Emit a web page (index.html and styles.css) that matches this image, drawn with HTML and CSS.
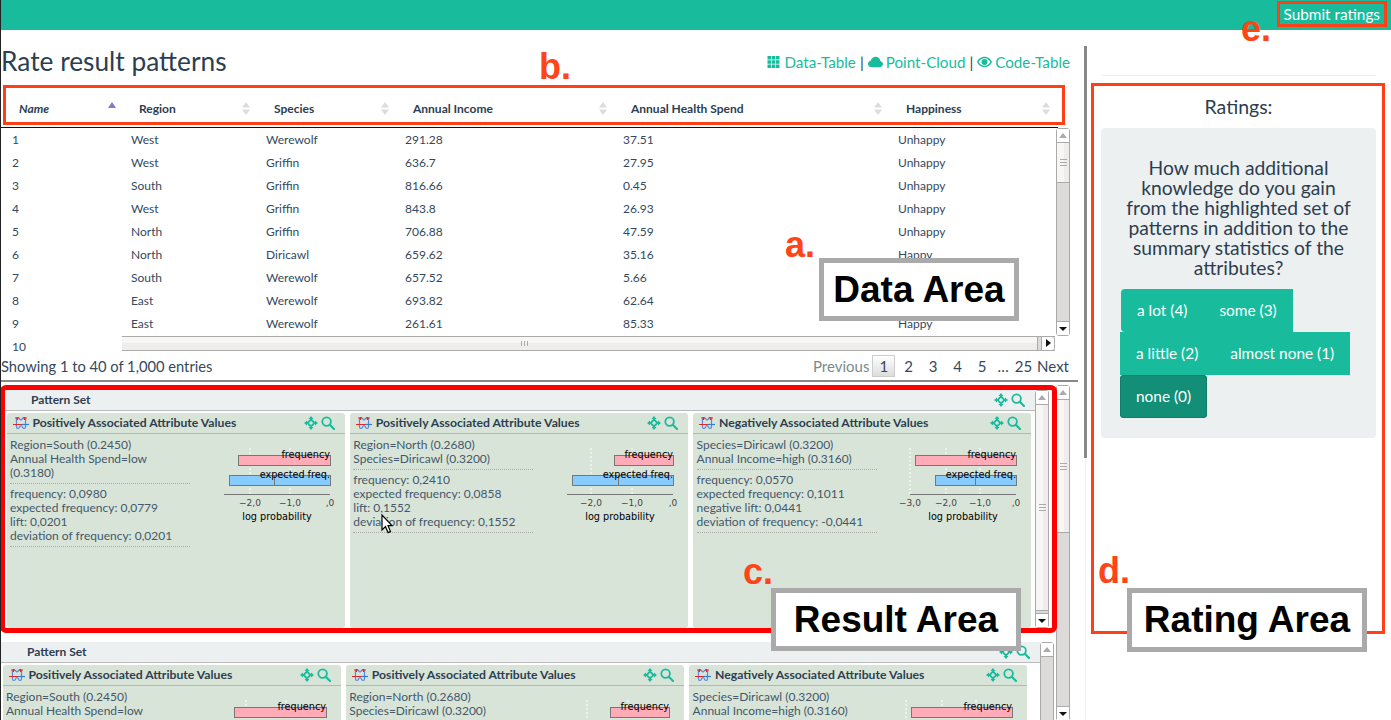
FILE: index.html
```html
<!DOCTYPE html>
<html lang="en">
<head>
<meta charset="utf-8">
<title>Rate result patterns</title>
<link rel="stylesheet" href="styles.css">
</head>
<body>
<svg class="defs" aria-hidden="true">
  <symbol id="i-move" viewBox="0 0 14 14"><path d="M7 0l2.500 3h-5zM7 14l-2.500-3h5zM0 7l3-2.500v5zM14 7l-3 2.500v-5z" fill="#18bc9c"/><path d="M7 3.500L10.500 7 7 10.500 3.500 7z" fill="none" stroke="#18bc9c" stroke-width="1.800"/></symbol>
  <symbol id="i-search" viewBox="0 0 14 14"><circle cx="5.600" cy="5.600" r="4.300" fill="none" stroke="#18bc9c" stroke-width="1.800"/><path d="M8.800 8.800l4.200 4.200" stroke="#18bc9c" stroke-width="2.200" stroke-linecap="round"/></symbol>
  <symbol id="i-pattern" viewBox="0 0 16 14"><path d="M5 1.500c-2 0-1.500 2.500-1.500 5.500s-.5 5.500 1.500 5.500c2 0 1.500-3 3-3s1 3 3 3 1.500-2.500 1.500-5.500S13 1.500 11 1.500 9.500 4 8 4 7 1.500 5 1.500z" fill="none" stroke="#5a86d8" stroke-width="1.200"/><path d="M0 8.500h9M2 2h4M10 2h4M4.500 1v3M11.500 1v3" stroke="#e8242a" stroke-width="1.200" fill="none"/><path d="M9 8.500h7" stroke="#2f7fd8" stroke-width="1.200"/></symbol>
  <symbol id="i-sort" viewBox="0 0 8 13"><path d="M4 0l4 5.500H0zM4 13L0 7.500h8z" fill="#dcdcdc"/></symbol>
</svg>

<header class="topbar"><a class="submit">Submit ratings</a></header>

<main class="main">
  <section class="left">
    <div class="title-row">
      <h1 class="title">Rate result patterns</h1>
      <nav class="views">
        <svg class="view-icon" viewBox="0 0 14 14"><path d="M1 1h3.600v3.600H1zM5.200 1h3.600v3.600H5.200zM9.400 1H13v3.600H9.400zM1 5.200h3.600v3.600H1zM5.200 5.200h3.600v3.600H5.200zM9.400 5.200H13v3.600H9.400zM1 9.400h3.600V13H1zM5.200 9.400h3.600V13H5.200zM9.400 9.400H13V13H9.400z" fill="#18bc9c"/></svg>
        <a class="view-link">Data-Table</a><span class="sep">|</span>
        <svg class="view-icon" viewBox="0 0 16 14"><path d="M4 12.500C1.800 12.500 0 11 0 9c0-1.800 1.300-3.100 3-3.300C3.500 3.300 5.600 1.500 8.200 1.500c2.600 0 4.700 1.900 5 4.300 1.600.4 2.800 1.700 2.800 3.300 0 1.900-1.600 3.400-3.600 3.400z" fill="#18bc9c"/></svg>
        <a class="view-link">Point-Cloud</a><span class="sep">|</span>
        <svg class="view-icon" viewBox="0 0 16 14"><path fill-rule="evenodd" d="M8 1.500c3.800 0 6.800 2.600 8 5.500-1.200 2.900-4.200 5.500-8 5.500S1.200 9.900 0 7c1.200-2.900 4.200-5.500 8-5.500zM8 3C5.400 3 3 4.700 1.700 7 3 9.300 5.400 11 8 11s5-1.700 6.300-4C13 4.700 10.600 3 8 3zm0 .8a3.200 3.200 0 1 1 0 6.400 3.200 3.200 0 0 1 0-6.400z" fill="#18bc9c"/></svg>
        <a class="view-link">Code-Table</a>
      </nav>
    </div>

    <div class="thead">
      <div class="th th-sorted"><span>Name</span><i class="sort-up"></i></div>
      <div class="th"><span>Region</span><svg class="sort"><use href="#i-sort"/></svg></div>
      <div class="th"><span>Species</span><svg class="sort"><use href="#i-sort"/></svg></div>
      <div class="th"><span>Annual Income</span><svg class="sort"><use href="#i-sort"/></svg></div>
      <div class="th"><span>Annual Health Spend</span><svg class="sort"><use href="#i-sort"/></svg></div>
      <div class="th th-last"><span>Happiness</span><svg class="sort"><use href="#i-sort"/></svg></div>
    </div>

    <div class="tbody-wrap">
      <div class="tbody">
        <div class="tr"><span>1</span><span>West</span><span>Werewolf</span><span>291.28</span><span>37.51</span><span>Unhappy</span></div>
        <div class="tr"><span>2</span><span>West</span><span>Griffin</span><span>636.7</span><span>27.95</span><span>Unhappy</span></div>
        <div class="tr"><span>3</span><span>South</span><span>Griffin</span><span>816.66</span><span>0.45</span><span>Unhappy</span></div>
        <div class="tr"><span>4</span><span>West</span><span>Griffin</span><span>843.8</span><span>26.93</span><span>Unhappy</span></div>
        <div class="tr"><span>5</span><span>North</span><span>Griffin</span><span>706.88</span><span>47.59</span><span>Unhappy</span></div>
        <div class="tr"><span>6</span><span>North</span><span>Diricawl</span><span>659.62</span><span>35.16</span><span>Happy</span></div>
        <div class="tr"><span>7</span><span>South</span><span>Werewolf</span><span>657.52</span><span>5.66</span><span></span></div>
        <div class="tr"><span>8</span><span>East</span><span>Werewolf</span><span>693.82</span><span>62.64</span><span></span></div>
        <div class="tr"><span>9</span><span>East</span><span>Werewolf</span><span>261.61</span><span>85.33</span><span>Happy</span></div>
        <div class="tr"><span>10</span></div>
      </div>
      <div class="vbar vbar-table">
        <b class="btn-up"></b>
        <div class="track"><div class="thumb thumb-table"><i class="grip"></i></div></div>
        <b class="btn-down"></b>
      </div>
      <div class="hbar">
        <div class="hthumb"><i class="hgrip"></i></div>
        <b class="btn-right"></b>
      </div>
    </div>

    <div class="table-foot">
      <span class="info">Showing 1 to 40 of 1,000 entries</span>
      <div class="pager">
        <a class="pg-prev">Previous</a>
        <a class="pg-current">1</a>
        <a class="pg">2</a><a class="pg">3</a><a class="pg">4</a><a class="pg">5</a>
        <span class="pg-gap">…</span>
        <a class="pg-end">25</a>
        <a class="pg-end">Next</a>
      </div>
    </div>

    <div class="results">
      <div class="sets">
        <div class="set set-first">
          <div class="set-body">
            <div class="set-head"><span>Pattern Set</span><span class="tools"><svg class="ico"><use href="#i-move"/></svg><svg class="ico"><use href="#i-search"/></svg></span></div>
            <div class="cards">
              <article class="card">
                <div class="card-head"><svg class="pat"><use href="#i-pattern"/></svg><h3>Positively Associated Attribute Values</h3><span class="tools"><svg class="ico"><use href="#i-move"/></svg><svg class="ico"><use href="#i-search"/></svg></span></div>
                <div class="card-body">
                  <div class="stats">
                    <p class="items">Region=South (0.2450)<br>Annual Health Spend=low (0.3180)</p>
                    <p class="items">frequency: 0,0980<br>expected frequency: 0,0779<br>lift: 0,0201<br>deviation of frequency: 0,0201</p>
                  </div>
                  <svg class="chart" viewBox="-6 0 126 90">
                    <path class="dash" d="M35 8v46M75 8v46"/>
                    <rect class="bar-pink" x="23.500" y="15.500" width="92" height="10"/>
                    <rect class="bar-blue" x="14.500" y="35.500" width="101" height="10"/>
                    <path class="axis" d="M59.500 35v11M9 54.500h106"/>
                    <text class="lbl" x="115" y="18" text-anchor="end">frequency</text>
                    <text class="lbl" x="115" y="38" text-anchor="end">expected freq.</text>
                    <text class="tick" x="35" y="66" text-anchor="middle">−2,0</text>
                    <text class="tick" x="75" y="66" text-anchor="middle">−1,0</text>
                    <text class="tick" x="115" y="66" text-anchor="middle">,0</text>
                    <text class="lbl" x="62" y="80" text-anchor="middle">log probability</text>
                  </svg>
                </div>
              </article>
              <article class="card">
                <div class="card-head"><svg class="pat"><use href="#i-pattern"/></svg><h3>Positively Associated Attribute Values</h3><span class="tools"><svg class="ico"><use href="#i-move"/></svg><svg class="ico"><use href="#i-search"/></svg></span></div>
                <div class="card-body">
                  <div class="stats">
                    <p class="items">Region=North (0.2680)<br>Species=Diricawl (0.3200)</p>
                    <p class="items">frequency: 0,2410<br>expected frequency: 0,0858<br>lift: 0,1552<br>deviation of frequency: 0,1552</p>
                  </div>
                  <svg class="chart" viewBox="-6 0 126 90">
                    <path class="dash" d="M33 8v46M74 8v46"/>
                    <rect class="bar-pink" x="56.500" y="15.500" width="59" height="10"/>
                    <rect class="bar-blue" x="14.500" y="35.500" width="101" height="10"/>
                    <path class="axis" d="M60.500 35v11M9 54.500h106"/>
                    <text class="lbl" x="115" y="18" text-anchor="end">frequency</text>
                    <text class="lbl" x="115" y="38" text-anchor="end">expected freq.</text>
                    <text class="tick" x="33" y="66" text-anchor="middle">−2,0</text>
                    <text class="tick" x="74" y="66" text-anchor="middle">−1,0</text>
                    <text class="tick" x="115" y="66" text-anchor="middle">,0</text>
                    <text class="lbl" x="62" y="80" text-anchor="middle">log probability</text>
                  </svg>
                </div>
              </article>
              <article class="card">
                <div class="card-head"><svg class="pat"><use href="#i-pattern"/></svg><h3>Negatively Associated Attribute Values</h3><span class="tools"><svg class="ico"><use href="#i-move"/></svg><svg class="ico"><use href="#i-search"/></svg></span></div>
                <div class="card-body">
                  <div class="stats">
                    <p class="items">Species=Diricawl (0.3200)<br>Annual Income=high (0.3160)</p>
                    <p class="items">frequency: 0,0570<br>expected frequency: 0,1011<br>negative lift: 0,0441<br>deviation of frequency: -0,0441</p>
                  </div>
                  <svg class="chart" viewBox="-6 0 126 90">
                    <path class="dash" d="M9 8v46M45 8v46M79 8v46"/>
                    <rect class="bar-pink" x="14.500" y="15.500" width="101" height="10"/>
                    <rect class="bar-blue" x="34.500" y="35.500" width="81" height="10"/>
                    <path class="axis" d="M74.500 35v11M9 54.500h106"/>
                    <text class="lbl" x="115" y="18" text-anchor="end">frequency</text>
                    <text class="lbl" x="115" y="38" text-anchor="end">expected freq.</text>
                    <text class="tick" x="9" y="66" text-anchor="middle">−3,0</text>
                    <text class="tick" x="45" y="66" text-anchor="middle">−2,0</text>
                    <text class="tick" x="79" y="66" text-anchor="middle">−1,0</text>
                    <text class="tick" x="115" y="66" text-anchor="middle">,0</text>
                    <text class="lbl" x="62" y="80" text-anchor="middle">log probability</text>
                  </svg>
                </div>
              </article>
            </div>
          </div>
          <div class="vbar vbar-inner">
            <b class="btn-up"></b>
            <div class="track"><div class="thumb thumb-full"><i class="grip"></i></div></div>
            <b class="btn-down"></b>
          </div>
        </div>

        <div class="set set-second">
          <div class="set-body">
            <div class="set-head"><span>Pattern Set</span><span class="tools"><svg class="ico"><use href="#i-move"/></svg><svg class="ico"><use href="#i-search"/></svg></span></div>
            <div class="cards">
              <article class="card">
                <div class="card-head"><svg class="pat"><use href="#i-pattern"/></svg><h3>Positively Associated Attribute Values</h3><span class="tools"><svg class="ico"><use href="#i-move"/></svg><svg class="ico"><use href="#i-search"/></svg></span></div>
                <div class="card-body">
                  <div class="stats"><p class="items">Region=South (0.2450)<br>Annual Health Spend=low</p></div>
                  <svg class="chart chart-short" viewBox="-6 0 126 26">
                    <path class="dash" d="M35 8v18M75 8v18"/>
                    <rect class="bar-pink" x="23.500" y="15.500" width="92" height="10"/>
                    <text class="lbl" x="115" y="18" text-anchor="end">frequency</text>
                  </svg>
                </div>
              </article>
              <article class="card">
                <div class="card-head"><svg class="pat"><use href="#i-pattern"/></svg><h3>Positively Associated Attribute Values</h3><span class="tools"><svg class="ico"><use href="#i-move"/></svg><svg class="ico"><use href="#i-search"/></svg></span></div>
                <div class="card-body">
                  <div class="stats"><p class="items">Region=North (0.2680)<br>Species=Diricawl (0.3200)</p></div>
                  <svg class="chart chart-short" viewBox="-6 0 126 26">
                    <path class="dash" d="M33 8v18M74 8v18"/>
                    <rect class="bar-pink" x="56.500" y="15.500" width="59" height="10"/>
                    <text class="lbl" x="115" y="18" text-anchor="end">frequency</text>
                  </svg>
                </div>
              </article>
              <article class="card">
                <div class="card-head"><svg class="pat"><use href="#i-pattern"/></svg><h3>Negatively Associated Attribute Values</h3><span class="tools"><svg class="ico"><use href="#i-move"/></svg><svg class="ico"><use href="#i-search"/></svg></span></div>
                <div class="card-body">
                  <div class="stats"><p class="items">Species=Diricawl (0.3200)<br>Annual Income=high (0.3160)</p></div>
                  <svg class="chart chart-short" viewBox="-6 0 126 26">
                    <path class="dash" d="M9 8v18M45 8v18M79 8v18"/>
                    <rect class="bar-pink" x="14.500" y="15.500" width="101" height="10"/>
                    <text class="lbl" x="115" y="18" text-anchor="end">frequency</text>
                  </svg>
                </div>
              </article>
            </div>
          </div>
          <div class="vbar vbar-inner2">
            <b class="btn-up"></b>
            <div class="track"></div>
          </div>
        </div>
      </div>
      <div class="vbar vbar-outer">
        <b class="btn-up"></b>
        <div class="track"><div class="thumb thumb-outer"><i class="grip"></i></div></div>
        <b class="btn-down"></b>
      </div>
    </div>
  </section>

  <div class="divider"><i class="divider-dark"></i><i class="divider-light"></i></div>

  <aside class="right">
    <hr class="rule">
    <h2 class="ratings-title">Ratings:</h2>
    <div class="well">
      <p class="question">How much additional knowledge do you gain from the highlighted set of patterns in addition to the summary statistics of the attributes?</p>
      <div class="btn-row btn-row-first"><a class="btn">a lot (4)</a><a class="btn">some (3)</a></div>
      <div class="btn-row"><a class="btn">a little (2)</a><a class="btn">almost none (1)</a></div>
      <div class="btn-row"><a class="btn btn-active">none (0)</a></div>
    </div>
  </aside>
</main>

<div class="note-frame frame-b"></div>
<div class="note-frame frame-c"></div>
<div class="note-frame frame-d"></div>
<div class="note-frame frame-e"></div>
<span class="note-letter letter-a">a.</span>
<span class="note-letter letter-b">b.</span>
<span class="note-letter letter-c">c.</span>
<span class="note-letter letter-d">d.</span>
<span class="note-letter letter-e">e.</span>
<div class="note-box box-data">Data Area</div>
<div class="note-box box-result">Result Area</div>
<div class="note-box box-rating">Rating Area</div>
<svg class="cursor" viewBox="0 0 12 20"><path d="M1 1v15l3.500-3.400 2.500 6 2.500-1-2.500-6H11z" fill="#fff" stroke="#000" stroke-width="1.200"/></svg>
</body>
</html>
```
FILE: styles.css
```css
* { box-sizing: border-box; }
html, body { margin: 0; height: 720px; overflow: hidden; }
body {
  position: relative;
  width: 1391px;
  background: #fff;
  color: #2c3e50;
  font-family: Lato, "Open Sans", sans-serif;
  font-size: 15px;
  border-left: 1px solid #222;
}
.defs { position: absolute; width: 0; height: 0; }

.topbar {
  height: 30px;
  background: #18bc9c;
  display: flex;
  justify-content: flex-end;
  align-items: flex-start;
  padding: 5px 11px 0 0;
}
.submit { color: #fff; font-size: 15.300px; line-height: 18px; }

.main { display: flex; height: 690px; }
.left { width: 1083px; flex: none; display: flex; flex-direction: column; }

.title-row {
  height: 55px;
  display: flex;
  justify-content: space-between;
  align-items: flex-start;
  padding: 14px 8px 0 0;
  width: 1077px;
}
.title { margin: 0; font-size: 26.300px; font-weight: 400; line-height: 34px; }
.views { display: flex; align-items: center; font-size: 15.200px; line-height: 36px; color: #18bc9c; }
.view-link { color: #18bc9c; margin-left: 3px; }
.sep { color: #2c3e50; margin: 0 4px; }
.view-icon { width: 15px; height: 14px; }

.thead {
  width: 1057px;
  height: 43px;
  display: grid;
  grid-template-columns: 130px 135px 139px 218px 275px 160px;
  align-items: center;
  padding-top: 5px;
  border-bottom: 1px solid #111;
  font-size: 12px;
  font-weight: 700;
}
.th { display: flex; justify-content: space-between; align-items: center; padding: 0 16px 0 8px; }
.th-sorted { padding-left: 18px; font-style: italic; }
.th-last { padding-right: 8px; }
.sort { width: 8px; height: 13px; }
.sort-up {
  width: 0; height: 0;
  border-left: 4px solid transparent;
  border-right: 4px solid transparent;
  border-bottom: 6px solid #7c7cd0;
  margin-top: -8px;
  margin-right: -1px;
}

.tbody-wrap { position: relative; height: 226px; width: 1069px; display: flex; overflow: hidden; }
.tbody { flex: 1; overflow: hidden; }
.tr {
  height: 23px;
  display: grid;
  grid-template-columns: 119px 135px 139px 218px 275px 100px;
  align-items: center;
  padding-left: 11px;
  font-size: 12px;
  color: #34495e;
}

.vbar {
  width: 14px;
  flex: none;
  display: flex;
  flex-direction: column;
  border: 1px solid #aaa;
  border-radius: 3px;
  background: #dcdbd9;
}
.vbar b {
  height: 14px;
  flex: none;
  background: #fff;
  position: relative;
}
.btn-up { border-bottom: 1px solid #aaa; }
.btn-up::after {
  content: "";
  position: absolute;
  left: 2px; top: 4px;
  border-left: 4px solid transparent;
  border-right: 4px solid transparent;
  border-bottom: 5px solid #aaa;
}
.btn-down { border-top: 1px solid #aaa; }
.btn-down::after {
  content: "";
  position: absolute;
  left: 2px; top: 5px;
  border-left: 4px solid transparent;
  border-right: 4px solid transparent;
  border-top: 4px solid #111;
}
.track { flex: 1; }
.thumb {
  background: linear-gradient(90deg, #f7f6f4 60%, #eeedeb 60%);
  border-bottom: 1px solid #aaa;
  display: flex;
  align-items: center;
  justify-content: center;
}
.grip { width: 7px; height: 7px; border-top: 1px solid #aaa; border-bottom: 1px solid #aaa; background: linear-gradient(#aaa, #aaa) center / 100% 1px no-repeat; }
.vbar-table { height: 208px; }
.thumb-table { height: 40px; }
.thumb-full { height: 206px; }
.thumb-outer { height: 133px; }
.vbar-outer { height: 336px; margin-left: 1px; }
.vbar-inner { height: 238px; margin-top: 5px; }
.vbar-inner2 { height: 90px; margin-left: 0; }

.hbar {
  position: absolute;
  left: 121px; top: 208px;
  width: 933px; height: 15px;
  display: flex;
  background: #dcdbd9;
  border-top: 1px solid #aaa;
  border-bottom: 1px solid #aaa;
}
.hthumb {
  flex: 1;
  margin-right: 3px;
  background: linear-gradient(#f7f6f4 50%, #eeedeb 50%);
  border-right: 1px solid #aaa;
  display: flex; align-items: center; justify-content: center;
  padding-right: 110px;
}
.hgrip { width: 7px; height: 5px; border-left: 1px solid #aaa; border-right: 1px solid #aaa; background: linear-gradient(#aaa, #aaa) center / 1px 100% no-repeat; }
.btn-right {
  width: 14px;
  background: #fff;
  border: 1px solid #aaa;
  border-width: 0 1px 0 1px;
  border-radius: 0 3px 3px 0;
  position: relative;
}
.btn-right::after {
  content: "";
  position: absolute;
  left: 4px; top: 2px;
  border-top: 4px solid transparent;
  border-bottom: 4px solid transparent;
  border-left: 5px solid #111;
}

.table-foot {
  width: 1077px;
  height: 28px;
  display: flex;
  justify-content: space-between;
  align-items: center;
  padding: 0 9px 2px 0;
  border-bottom: 2px solid #888;
}
.info { color: #34495e; font-size: 14.700px; }
.pager { display: flex; align-items: center; color: #34495e; }
.pg-prev { color: #7b8a8b; margin-right: 3px; }
.pg-current {
  width: 23px; height: 22px;
  line-height: 20px;
  text-align: center;
  border: 1px solid #ccc;
  background: linear-gradient(#fff, #ddd);
  margin-right: 1px;
}
.pg { width: 24.500px; text-align: center; }
.pg-gap { margin: 0 6px 0 3px; }
.pg-end { margin-right: 5px; }
.pg-end:last-child { margin-right: 0; }

.results { flex: 1; display: flex; padding-top: 3px; width: 1069px; overflow: hidden; }
.sets { flex: 1; min-width: 0; }
.set { display: flex; }
.set-first { height: 243px; padding: 0 6px 0 4px; }
.set-second { margin-top: 14px; padding: 0 1px 0 0; }
.set-body { flex: 1; min-width: 0; }
.set-first .set-body { padding-top: 5px; }
.set-head {
  height: 21px;
  display: flex;
  justify-content: space-between;
  align-items: center;
  background: #ecf0f1;
  border-bottom: 1px solid #bbb;
  font-size: 12px;
  font-weight: 700;
  padding: 0 10px 1px 26px;
}
.tools { display: flex; gap: 3px; align-items: center; }
.ico { width: 14px; height: 14px; }
.cards { display: flex; gap: 5px; padding: 2px 0 0 1.500px; }
.card {
  width: 338.300px;
  height: 215px;
  flex: none;
  background: #d9e4d9;
  border-radius: 3px;
}
.card-head {
  height: 21px;
  display: flex;
  align-items: center;
  padding: 0 10px 1px 6px;
  border-bottom: 1px solid #b5b5b5;
}
.pat { width: 16px; height: 14px; flex: none; }
.card-head h3 { margin: 0 auto 0 4px; font-size: 12.200px; font-weight: 700; }
.card-body { display: flex; justify-content: space-between; padding: 4px 10px 0 3.500px; }
.stats { width: 180px; font-size: 12px; line-height: 14px; color: #43586a; }
.items { margin: 0 0 3px; padding-bottom: 3px; border-bottom: 1px dotted #aaa; }
.chart { width: 126px; height: 90px; margin-top: 2px; }
.chart-short { height: 26px; }
.dash { stroke: #fff; stroke-dasharray: 2 2; fill: none; }
.bar-pink { fill: #ffabb8; stroke: #777; }
.bar-blue { fill: #88ccff; stroke: #777; }
.axis { stroke: #777; fill: none; }
.lbl { font-family: "DejaVu Sans", sans-serif; font-size: 9.700px; fill: #000; }
.tick { font-family: "DejaVu Sans", sans-serif; font-size: 9px; fill: #444; }

.divider { width: 3px; flex: none; display: flex; flex-direction: column; padding-top: 16px; }
.divider-dark { height: 412px; background: #888; }
.divider-light { flex: 1; width: 1px; margin-left: 1px; background: #eee; }

.right { flex: 1; padding: 45px 15px 0 14px; }
.rule { margin: 0; border: 0; border-top: 1px solid #ecf0f1; }
.ratings-title { margin: 19px 0 9px; font-size: 19.500px; font-weight: 400; line-height: 24px; text-align: center; }
.well { height: 310px; background: #ecf0f1; border-radius: 4px; padding: 30px 19px 0; }
.question { margin: 0 0 11px; font-size: 19.300px; line-height: 20px; text-align: center; }
.btn-row { display: flex; }
.btn-row-first { margin-left: 1px; }
.btn {
  height: 43px;
  line-height: 43px;
  padding: 0 16px;
  background: #18bc9c;
  color: #fff;
  font-size: 15.400px;
  white-space: nowrap;
}
.btn-row-first .btn:first-child { border-radius: 4px 0 0 4px; }
.btn-active { background: #128f76; border-radius: 4px; box-shadow: inset 0 0 0 1px #0f7f68; }

.note-frame { position: absolute; border: 3px solid #ff4016; }
.frame-b { left: 2px; top: 85px; width: 1062px; height: 40px; }
.frame-c { left: -1px; top: 385px; width: 1057px; height: 248px; border: 5px solid #f00; border-radius: 6px; }
.frame-d { left: 1090px; top: 83px; width: 294px; height: 551px; }
.frame-e { left: 1276px; top: 1px; width: 110px; height: 26px; }
.note-letter {
  position: absolute;
  font-family: "Liberation Sans", Arial, sans-serif;
  font-size: 36px;
  font-weight: 700;
  line-height: 40px;
  color: #ff4517;
}
.letter-a { left: 784px; top: 225px; }
.letter-b { left: 538px; top: 47px; }
.letter-c { left: 742px; top: 552px; }
.letter-d { left: 1097px; top: 551px; }
.letter-e { left: 1240px; top: 9px; }
.note-box {
  position: absolute;
  height: 63px;
  border: 5px solid #aaa;
  background: #fff;
  color: #000;
  font-family: "Liberation Sans", Arial, sans-serif;
  font-size: 37px;
  font-weight: 700;
  line-height: 53px;
  text-align: center;
  white-space: nowrap;
}
.box-data { left: 818px; top: 258px; width: 200px; }
.box-result { left: 770px; top: 588px; width: 250px; }
.box-rating { left: 1126px; top: 588px; width: 240px; height: 64px; }
.cursor { position: absolute; left: 380px; top: 514px; width: 12px; height: 20px; }
```
